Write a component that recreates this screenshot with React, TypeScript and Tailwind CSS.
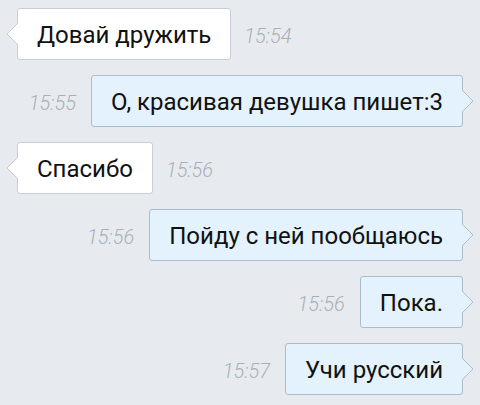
import React from "react";

type Msg = { text: string; time: string; out: boolean };

const msgs: Msg[] = [
  { text: "Довай дружить", time: "15:54", out: false },
  { text: "О, красивая девушка пишет:3", time: "15:55", out: true },
  { text: "Спасибо", time: "15:56", out: false },
  { text: "Пойду с ней пообщаюсь", time: "15:56", out: true },
  { text: "Пока.", time: "15:56", out: true },
  { text: "Учи русский", time: "15:57", out: true },
];

function Bubble({ m }: { m: Msg }) {
  return (
    <div
      className={
        m.out
          ? "relative flex h-[52px] items-center rounded-[3px] border border-[#abbdcc] bg-[#e3f2fc] px-[19px]"
          : "relative flex h-[52px] items-center rounded-[3px] border border-[#c9ced4] bg-white px-[19px]"
      }
    >
      <span className="text-[24px] leading-none text-[#111] pt-[1px]">{m.text}</span>
      {m.out ? (
        <svg
          width="12"
          height="22"
          viewBox="0 0 12 22"
          className="absolute right-[-12px] top-1/2 -translate-y-1/2"
        >
          <polygon points="0,0 11,11 0,22" fill="#e3f2fc" />
          <polyline points="0,0 11,11 0,22" fill="none" stroke="#abbdcc" strokeWidth="1" />
        </svg>
      ) : (
        <svg
          width="12"
          height="22"
          viewBox="0 0 12 22"
          className="absolute left-[-12px] top-1/2 -translate-y-1/2"
        >
          <polygon points="12,0 1,11 12,22" fill="#ffffff" />
          <polyline points="12,0 1,11 12,22" fill="none" stroke="#c9ced4" strokeWidth="1" />
        </svg>
      )}
    </div>
  );
}

function Time({ t }: { t: string }) {
  return (
    <span className="mt-[4px] text-[20px] font-light italic leading-none text-[#a9afb5]">{t}</span>
  );
}

export default function App() {
  return (
    <div
      className="flex h-[405px] w-[480px] flex-col gap-[15px] overflow-hidden bg-[#e7ebf0] pt-[8px]"
      style={{ fontFamily: "Roboto, 'Noto Sans', sans-serif" }}
    >
      {msgs.map((m, i) =>
        m.out ? (
          <div key={i} className="flex items-center justify-end gap-[15px] pr-[17px]">
            <Time t={m.time} />
            <Bubble m={m} />
          </div>
        ) : (
          <div key={i} className="flex items-center gap-[13px] pl-[17px]">
            <Bubble m={m} />
            <Time t={m.time} />
          </div>
        )
      )}
    </div>
  );
}
